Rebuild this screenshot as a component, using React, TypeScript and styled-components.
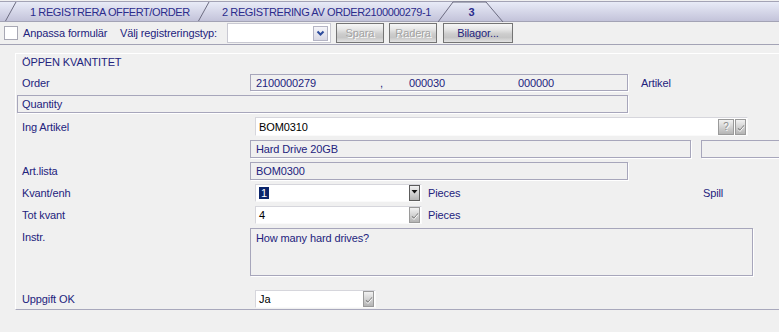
import React from "react";
import styled, { createGlobalStyle } from "styled-components";

const Global = createGlobalStyle`
  html, body { margin: 0; padding: 0; background: #f0f0f0; }
  body {
    font-family: "Liberation Sans", Arial, sans-serif;
    font-size: 11px;
    letter-spacing: -0.12px;
    color: #23237d;
    width: 779px;
    height: 332px;
    overflow: hidden;
  }
  * { box-sizing: border-box; }
`;

const Page = styled.div`
  width: 779px;
  height: 332px;
  overflow: hidden;
  background: #f0f0f0;
`;

/* ---------- Tabs ---------- */
const TabBar = styled.div`
  display: flex;
  height: 21px;
  margin-top: 1px;
  padding-left: 5px;
  border-top: 1px solid #a3a3b5;
  border-bottom: 1px solid #a3a3b5;
  background: linear-gradient(#e8ebf7, #c3c3da);
`;

const SepSvg = styled.svg`
  flex: none;
  display: block;
`;

const Tab = styled.div<{ $w: number; $pl: number }>`
  flex: none;
  width: ${(p) => p.$w}px;
  padding-left: ${(p) => p.$pl}px;
  display: flex;
  align-items: center;
  color: #2b2b8c;
  white-space: nowrap;
  letter-spacing: -0.4px;
`;

const ActiveTab = styled.div`
  position: relative;
  flex: none;
  width: 66px;
  display: flex;
  align-items: center;
  justify-content: center;
  color: #2b2b8c;
  font-weight: bold;
`;

const ActiveShape = styled.svg`
  position: absolute;
  left: 0;
  top: -1px;
`;

const ActiveLabel = styled.span`
  position: relative;
  padding-left: 1px;
`;

const Slash = () => (
  <SepSvg width="12" height="19" viewBox="0 0 12 19">
    <line x1="0.5" y1="19" x2="11" y2="0" stroke="#6c6c80" strokeWidth="1" />
  </SepSvg>
);

/* ---------- Toolbar ---------- */
const Toolbar = styled.div`
  display: flex;
  align-items: center;
  height: 23px;
  border-bottom: 1px solid #a3a3b5;
  background: #f0f0f0;
`;

const CheckBox = styled.div`
  flex: none;
  width: 14px;
  height: 14px;
  margin-left: 4px;
  background: #fff;
  border: 1px solid #a8a8b4;
`;

const ToolText = styled.span<{ $ml: number; $w: number }>`
  flex: none;
  margin-left: ${(p) => p.$ml}px;
  width: ${(p) => p.$w}px;
  white-space: nowrap;
`;

const TypeSelect = styled.div`
  flex: none;
  display: flex;
  align-items: center;
  justify-content: flex-end;
  width: 104px;
  height: 20px;
  padding-right: 2px;
  background: #fff;
  border: 1px solid #c9c9d2;
`;

const ChevronBtn = styled.div`
  width: 15px;
  height: 15px;
  display: flex;
  align-items: center;
  justify-content: center;
  border: 1px solid #b4b4c4;
  background: linear-gradient(#f6f6fa, #d8d8e4);
`;

const Button = styled.div<{ $w: number; $disabled?: boolean }>`
  flex: none;
  width: ${(p) => p.$w}px;
  height: 20px;
  margin-left: ${(p) => (p.$w > 60 ? 6 : 5)}px;
  display: flex;
  align-items: center;
  justify-content: center;
  border: 1px solid #747474;
  background: linear-gradient(#f6f6f6 0%, #e6e6e6 30%, #cdcdcd 55%, #c6c6c6 75%, #e2e2e2 100%);
  color: ${(p) => (p.$disabled ? "#a3a3a3" : "#23237d")};
  text-shadow: ${(p) => (p.$disabled ? "1px 1px 0 #fff" : "none")};
  white-space: nowrap;
`;

/* ---------- Form panel ---------- */
const Panel = styled.div`
  margin: 8px 0 0 15px;
  border-top: 1px solid #fff;
  border-left: 1px solid #fff;
  border-bottom: 1px solid #a8a8bc;
  padding-bottom: 1px;
`;

const Row = styled.div<{ $h: number; $mt?: number; $top?: boolean }>`
  display: flex;
  align-items: ${(p) => (p.$top ? "flex-start" : "center")};
  height: ${(p) => p.$h}px;
  margin-top: ${(p) => p.$mt ?? 4}px;
  padding-left: 6px;
`;

const Title = styled.div`
  height: 16px;
  padding-left: 6px;
  display: flex;
  align-items: center;
`;

const Label = styled.div<{ $pt?: number }>`
  flex: none;
  width: 228px;
  padding-top: ${(p) => p.$pt ?? 0}px;
  white-space: nowrap;
`;

const SectionBox = styled.div`
  height: 18px;
  width: 611px;
  margin: 4px 0 0 1px;
  padding-left: 4px;
  display: flex;
  align-items: center;
  border: 1px solid #a7a6bb;
  box-shadow: 1px 1px 0 #fff;
`;

const ReadBox = styled.div<{ $w: number; $ml?: number }>`
  flex: none;
  width: ${(p) => p.$w}px;
  height: 100%;
  margin-left: ${(p) => p.$ml ?? 0}px;
  padding-left: 5px;
  display: flex;
  align-items: center;
  border: 1px solid #a7a6bb;
  box-shadow: 1px 1px 0 #fff;
  white-space: nowrap;
`;

const TextBox = styled.div<{ $w: number }>`
  flex: none;
  width: ${(p) => p.$w}px;
  height: 100%;
  padding: 3px 5px;
  border: 1px solid #a7a6bb;
  box-shadow: 1px 1px 0 #fff;
`;

const OrderGrid = styled.div`
  display: grid;
  grid-template-columns: 124px 29px 109px auto;
  width: 100%;
`;

const SideText = styled.span<{ $ml: number; $w?: number }>`
  flex: none;
  margin-left: ${(p) => p.$ml}px;
  width: ${(p) => (p.$w ? `${p.$w}px` : "auto")};
  white-space: nowrap;
`;

const WhiteField = styled.div<{ $w: number }>`
  flex: none;
  display: flex;
  align-items: center;
  width: ${(p) => p.$w}px;
  height: 100%;
  margin-left: 5px;
  padding-right: 1px;
  background: #fff;
  border: 1px solid;
  border-color: #d6d6dc #fafafa #fafafa #d6d6dc;
  color: #000;
`;

const FieldValue = styled.span`
  flex: 1;
  padding-left: 3px;
  white-space: nowrap;
`;

const Selected = styled.span`
  background: #0a246a;
  color: #fff;
  padding: 0 2px;
`;

const SmallBtn = styled.div<{ $w: number; $dark?: boolean }>`
  flex: none;
  width: ${(p) => p.$w}px;
  height: 16px;
  margin-left: 1px;
  display: flex;
  align-items: flex-start;
  justify-content: center;
  border: 1px solid ${(p) => (p.$dark ? "#5c5c5c" : "#9a9a9a")};
  background: linear-gradient(#f2f2f2 0%, #d6d6d6 45%, #b4b4b4 100%);
  color: #8e8e8e;
  text-shadow: 1px 1px 0 #fff;
  font-size: 10px;
  line-height: 14px;
`;

const DownArrow = () => (
  <svg width="7" height="6" viewBox="0 0 7 6" style={{ marginTop: 3 }}>
    <path d="M0.5 1 L6.5 1 L3.5 4.5 Z" fill="#111" />
  </svg>
);

const CheckMark = () => (
  <svg width="8" height="8" viewBox="0 0 8 8" style={{ marginTop: 4 }}>
    <path d="M1 4.5 L3 6.5 L7 1.5" fill="none" stroke="#7c7c7c" strokeWidth="1.2" />
    <path d="M1 5.5 L3 7.5 L7 2.5" fill="none" stroke="#ffffff" strokeWidth="1" />
  </svg>
);

const Chevron = () => (
  <svg width="9" height="7" viewBox="0 0 9 7">
    <path d="M1.5 1.5 L4.5 4.5 L7.5 1.5" fill="none" stroke="#2d4c9c" strokeWidth="2" />
  </svg>
);

export default function App() {
  return (
    <Page>
      <Global />
      <TabBar>
        <Slash />
        <Tab $w={181} $pl={13}>1 REGISTRERA OFFERT/ORDER</Tab>
        <Slash />
        <Tab $w={228} $pl={12}>2 REGISTRERING AV ORDER2100000279-1</Tab>
        <ActiveTab>
          <ActiveShape width="66" height="21" viewBox="0 0 66 21">
            <path d="M0 21 L15 1 L48 1 L65 21" fill="none" stroke="#6c6c80" strokeWidth="1" />
          </ActiveShape>
          <ActiveLabel>3</ActiveLabel>
        </ActiveTab>
      </TabBar>

      <Toolbar>
        <CheckBox />
        <ToolText $ml={5} $w={97}>Anpassa formulär</ToolText>
        <ToolText $ml={0} $w={107}>Välj registreringstyp:</ToolText>
        <TypeSelect>
          <ChevronBtn>
            <Chevron />
          </ChevronBtn>
        </TypeSelect>
        <Button $w={48} $disabled>Spara</Button>
        <Button $w={48} $disabled>Radera</Button>
        <Button $w={70}>Bilagor...</Button>
      </Toolbar>

      <Panel>
        <Title>ÖPPEN KVANTITET</Title>

        <Row $h={17}>
          <Label>Order</Label>
          <ReadBox $w={378}>
            <OrderGrid>
              <span>2100000279</span>
              <span>,</span>
              <span>000030</span>
              <span>000000</span>
            </OrderGrid>
          </ReadBox>
          <SideText $ml={13}>Artikel</SideText>
        </Row>

        <SectionBox>Quantity</SectionBox>

        <Row $h={19}>
          <Label>Ing Artikel</Label>
          <WhiteField $w={493}>
            <FieldValue>BOM0310</FieldValue>
            <SmallBtn $w={16}>?</SmallBtn>
            <SmallBtn $w={11}>
              <CheckMark />
            </SmallBtn>
          </WhiteField>
        </Row>

        <Row $h={18}>
          <Label />
          <ReadBox $w={441}>Hard Drive 20GB</ReadBox>
          <ReadBox $w={100} $ml={10} />
        </Row>

        <Row $h={18}>
          <Label>Art.lista</Label>
          <ReadBox $w={378}>BOM0300</ReadBox>
        </Row>

        <Row $h={18}>
          <Label>Kvant/enh</Label>
          <WhiteField $w={167}>
            <FieldValue>
              <Selected>1</Selected>
            </FieldValue>
            <SmallBtn $w={11} $dark>
              <DownArrow />
            </SmallBtn>
          </WhiteField>
          <SideText $ml={6} $w={275}>Pieces</SideText>
          <SideText $ml={0}>Spill</SideText>
        </Row>

        <Row $h={18}>
          <Label>Tot kvant</Label>
          <WhiteField $w={167}>
            <FieldValue>4</FieldValue>
            <SmallBtn $w={11}>
              <CheckMark />
            </SmallBtn>
          </WhiteField>
          <SideText $ml={6}>Pieces</SideText>
        </Row>

        <Row $h={48} $top>
          <Label $pt={3}>Instr.</Label>
          <TextBox $w={503}>How many hard drives?</TextBox>
        </Row>

        <Row $h={18} $mt={14}>
          <Label>Uppgift OK</Label>
          <WhiteField $w={121}>
            <FieldValue>Ja</FieldValue>
            <SmallBtn $w={11}>
              <CheckMark />
            </SmallBtn>
          </WhiteField>
        </Row>
      </Panel>
    </Page>
  );
}
